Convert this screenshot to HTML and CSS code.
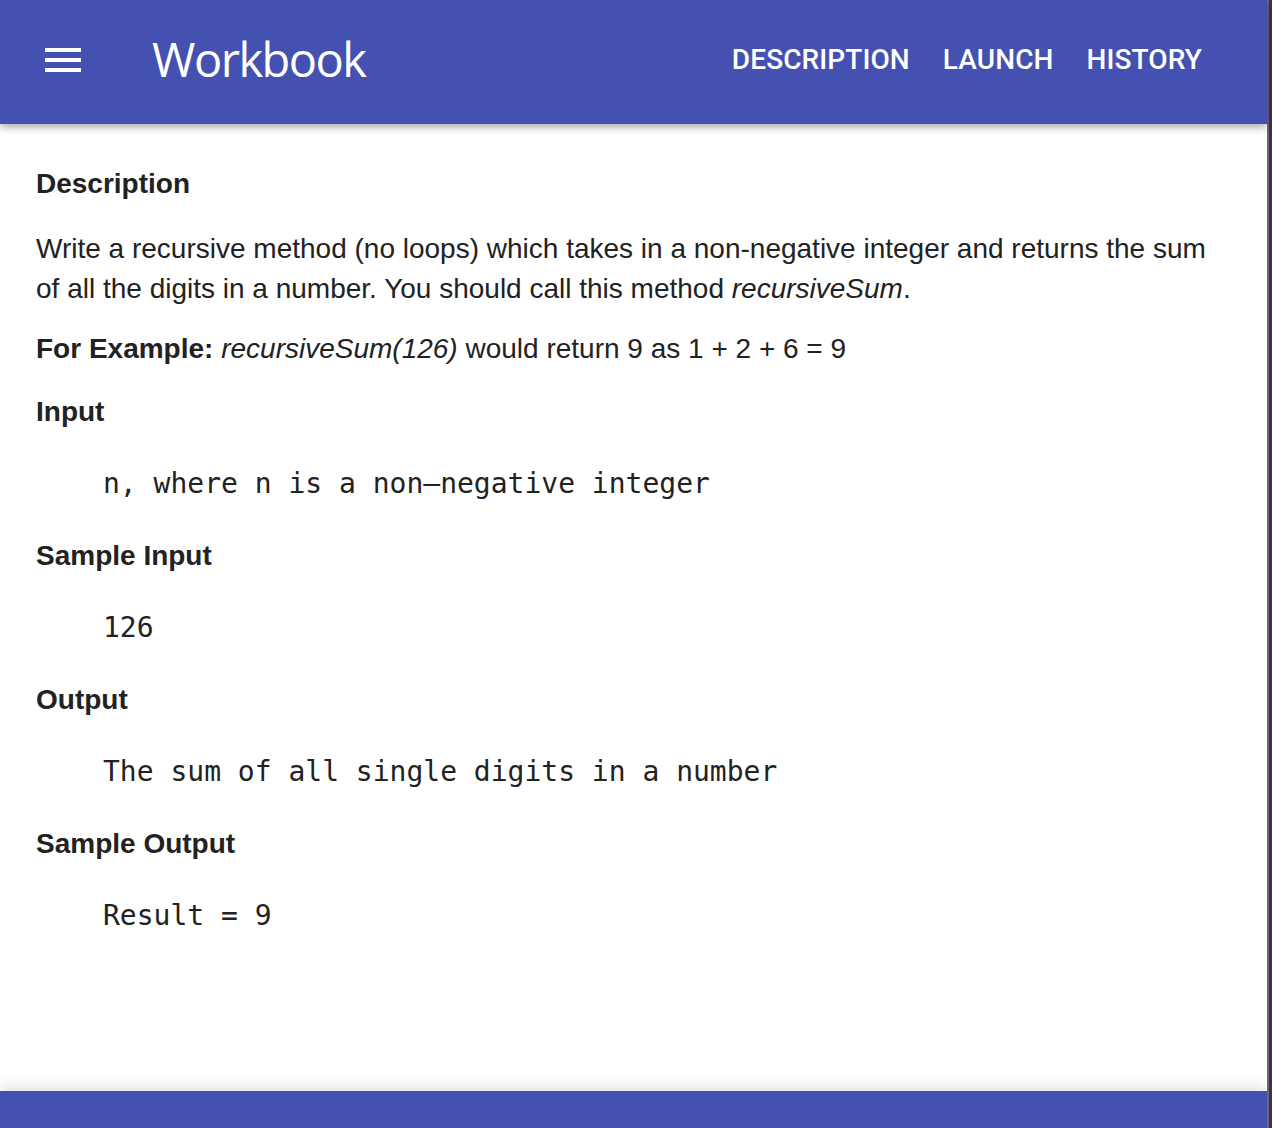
FILE: index.html
```html
<!DOCTYPE html>
<html>
<head>
<meta charset="utf-8">
<title>Workbook</title>
<link rel="stylesheet" href="styles.css">
</head>
<body>
<div class="frame">
  <div class="page">
    <header class="toolbar">
      <div class="menu-btn">
        <svg width="48" height="48" viewBox="0 0 24 24"><path fill="#fff" d="M3 18h18v-2H3v2zm0-5h18v-2H3v2zm0-7v2h18V6H3z"/></svg>
      </div>
      <div class="title">Workbook</div>
      <nav class="nav">
        <span class="nav-item">DESCRIPTION</span>
        <span class="nav-item">LAUNCH</span>
        <span class="nav-item">HISTORY</span>
      </nav>
    </header>
    <main class="content">
      <h4 class="heading">Description</h4>
      <p class="para first">Write a recursive method (no loops) which takes in a non-negative integer and returns the sum of all the digits in a number. You should call this method <em>recursiveSum</em>.</p>
      <p class="para"><strong>For Example:</strong> <em>recursiveSum(126)</em> would return 9 as 1 + 2 + 6 = 9</p>
      <h4 class="heading sec">Input</h4>
      <pre class="code">n, where n is a non–negative integer</pre>
      <h4 class="heading sec">Sample Input</h4>
      <pre class="code">126</pre>
      <h4 class="heading sec">Output</h4>
      <pre class="code">The sum of all single digits in a number</pre>
      <h4 class="heading sec">Sample Output</h4>
      <pre class="code">Result = 9</pre>
    </main>
    <footer class="footer"></footer>
  </div>
  <div class="edge-gray"></div>
  <div class="edge-purple"></div>
</div>
</body>
</html>
```

FILE: styles.css
```css
html, body {
  margin: 0;
  padding: 0;
  background: #ffffff;
}

.frame {
  display: flex;
  height: 1128px;
  overflow: hidden;
}

.page {
  width: 1267px;
  flex: 0 0 1267px;
  display: flex;
  flex-direction: column;
  background: #ffffff;
}

.edge-gray {
  flex: 0 0 2px;
  background: #6a6a6a;
}

.edge-purple {
  flex: 1 1 auto;
  background: #4a2a5e;
}

.toolbar {
  height: 124px;
  flex: 0 0 124px;
  background: #4451b0;
  display: flex;
  align-items: center;
  box-shadow: 0 3px 8px rgba(0, 0, 0, 0.35);
  position: relative;
  z-index: 2;
  color: #ffffff;
}

.menu-btn {
  width: 48px;
  height: 48px;
  margin-left: 39px;
  margin-top: -4px;
}

.menu-btn svg {
  display: block;
}

.title {
  font-family: "Open Sans", "Noto Sans", sans-serif;
  font-size: 47px;
  font-weight: 400;
  margin-left: 65px;
  margin-top: -6px;
  letter-spacing: -1.5px;
}

.nav {
  margin-left: auto;
  margin-right: 65px;
  display: flex;
  gap: 33px;
  margin-top: -6px;
}

.nav-item {
  font-family: Roboto, "Noto Sans", sans-serif;
  font-weight: 500;
  font-size: 28px;
  letter-spacing: 0.1px;
}

.content {
  flex: 1 1 auto;
  padding: 40px 36px 0 36px;
  color: #222222;
  font-family: "Liberation Sans", Arial, sans-serif;
  font-size: 28px;
}

.heading {
  margin: 0;
  font-size: 28px;
  font-weight: 700;
  line-height: 40px;
}

.heading.sec {
  margin-top: 32px;
}

.para {
  margin: 20px 0 0 0;
  line-height: 40px;
}

.para.first {
  margin-top: 25px;
}

.para + .heading.sec {
  margin-top: 23px;
}

.code {
  margin: 32px 0 0 0;
  padding-left: 67px;
  font-family: "DejaVu Sans Mono", "Liberation Mono", monospace;
  font-size: 28px;
  line-height: 40px;
  color: #222222;
}

.footer {
  flex: 0 0 37px;
  height: 37px;
  background: #4451b0;
  box-shadow: 0 -4px 14px rgba(0, 0, 0, 0.12);
}
```
